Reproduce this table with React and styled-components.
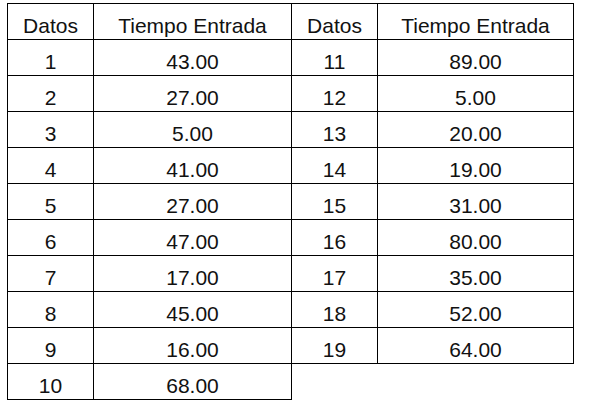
import styled, { createGlobalStyle } from "styled-components";

const GlobalStyle = createGlobalStyle`
  body {
    margin: 0;
    background: #ffffff;
    font-family: "Liberation Sans", Arial, sans-serif;
  }
`;

const left = {
  headers: ["Datos", "Tiempo Entrada"],
  rows: [
    [1, "43.00"],
    [2, "27.00"],
    [3, "5.00"],
    [4, "41.00"],
    [5, "27.00"],
    [6, "47.00"],
    [7, "17.00"],
    [8, "45.00"],
    [9, "16.00"],
    [10, "68.00"],
  ],
};

const right = {
  headers: ["Datos", "Tiempo Entrada"],
  rows: [
    [11, "89.00"],
    [12, "5.00"],
    [13, "20.00"],
    [14, "19.00"],
    [15, "31.00"],
    [16, "80.00"],
    [17, "35.00"],
    [18, "52.00"],
    [19, "64.00"],
  ],
};

const Sheet = styled.div`
  display: flex;
  align-items: flex-start;
  padding: 3px 0 0 7px;
`;

const Grid = styled.div`
  display: grid;
  grid-template-columns: ${(p) => p.$cols};
  grid-auto-rows: 36px;
  border-top: 1px solid #000;
  border-left: ${(p) => (p.$joined ? "none" : "1px solid #000")};
`;

const Cell = styled.div`
  box-sizing: border-box;
  display: flex;
  align-items: flex-end;
  justify-content: center;
  padding-bottom: 3px;
  border-right: 1px solid #000;
  border-bottom: 1px solid #000;
  font-size: 21px;
  line-height: 1;
  color: #111;
  white-space: nowrap;
`;

const DataTable = ({ data, cols, joined }) => (
  <Grid $cols={cols} $joined={joined}>
    {data.headers.map((h) => (
      <Cell key={h}>{h}</Cell>
    ))}
    {data.rows.map(([n, t]) => [
      <Cell key={`n${n}`}>{n}</Cell>,
      <Cell key={`t${n}`}>{t}</Cell>,
    ])}
  </Grid>
);

export default function App() {
  return (
    <>
      <GlobalStyle />
      <Sheet>
        <DataTable data={left} cols="86px 198px" />
        <DataTable data={right} cols="86px 196px" joined />
      </Sheet>
    </>
  );
}
